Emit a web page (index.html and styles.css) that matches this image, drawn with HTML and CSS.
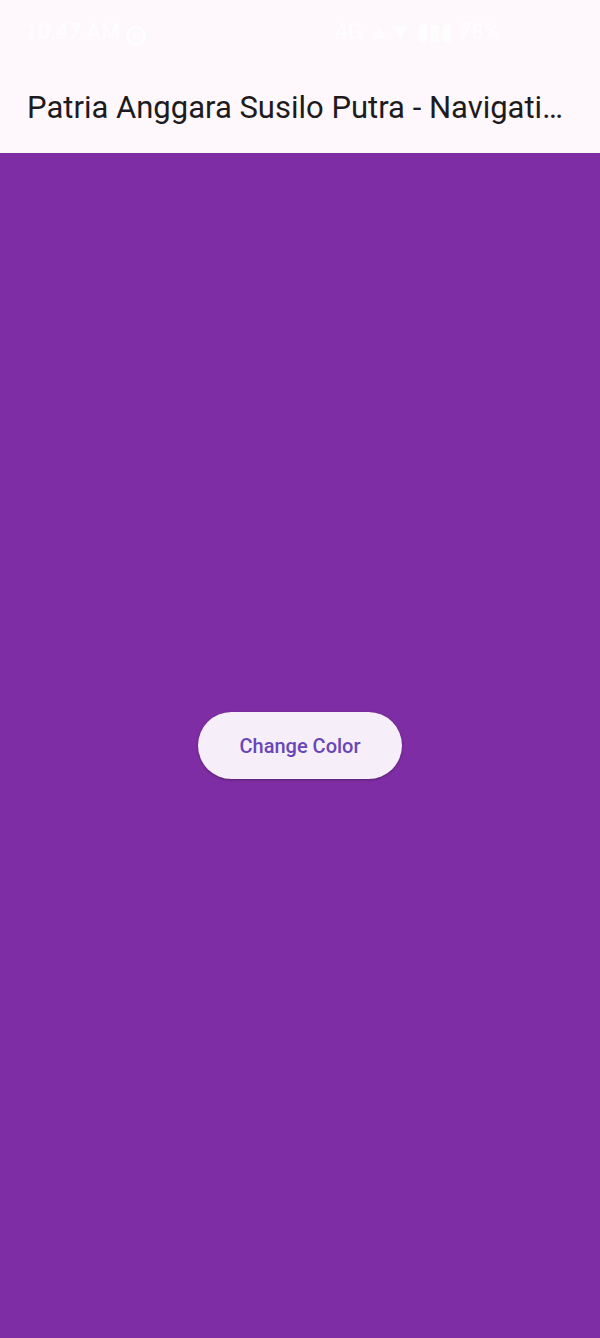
FILE: index.html
```html
<!DOCTYPE html>
<html>
<head>
<meta charset="utf-8">
<link rel="stylesheet" href="styles.css">
</head>
<body>
<div class="screen">
  <header class="appbar">
    <div class="status">
      <span class="status-left">10.47 AM <span class="ring">P</span></span>
      <span class="status-right">4G  ▲▼  ▮▮▮  78%</span>
    </div>
    <h1 class="title">Patria Anggara Susilo Putra - Navigation</h1>
  </header>
  <main class="content">
    <button class="btn">Change Color</button>
  </main>
</div>
</body>
</html>
```

FILE: styles.css
```css
html, body {
  margin: 0;
  padding: 0;
}
body {
  font-family: Roboto, "Noto Sans", sans-serif;
  background: #7f2da4;
}
.screen {
  width: 600px;
  height: 1338px;
  display: flex;
  flex-direction: column;
}
.appbar {
  background: #fef7fb;
  height: 153px;
  display: flex;
  flex-direction: column;
}
.status {
  height: 64px;
  display: flex;
  justify-content: space-between;
  align-items: center;
  padding: 0 100px 0 25px;
  color: rgba(255, 255, 255, 0.85);
  font-size: 22px;
  font-weight: 500;
}
.ring {
  display: inline-block;
  border: 3px solid rgba(255, 255, 255, 0.85);
  border-radius: 50%;
  width: 14px;
  height: 14px;
  font-size: 10px;
  text-align: center;
  line-height: 14px;
}
.title {
  margin: 0;
  padding: 0 32px 0 27px;
  font-size: 31px;
  font-weight: 400;
  color: #1d1b20;
  white-space: nowrap;
  overflow: hidden;
  text-overflow: ellipsis;
  line-height: 40px;
  margin-top: 24px;
}
.content {
  flex: 1;
  background: #7f2da4;
  display: flex;
  align-items: center;
  justify-content: center;
}
.btn {
  width: 204px;
  height: 67px;
  border: none;
  border-radius: 34px;
  background: #f6eff9;
  color: #6a45b8;
  font-family: Roboto, "Noto Sans", sans-serif;
  font-size: 20px;
  font-weight: 500;
  box-shadow: 0 1px 3px rgba(0,0,0,0.3);
}
```
